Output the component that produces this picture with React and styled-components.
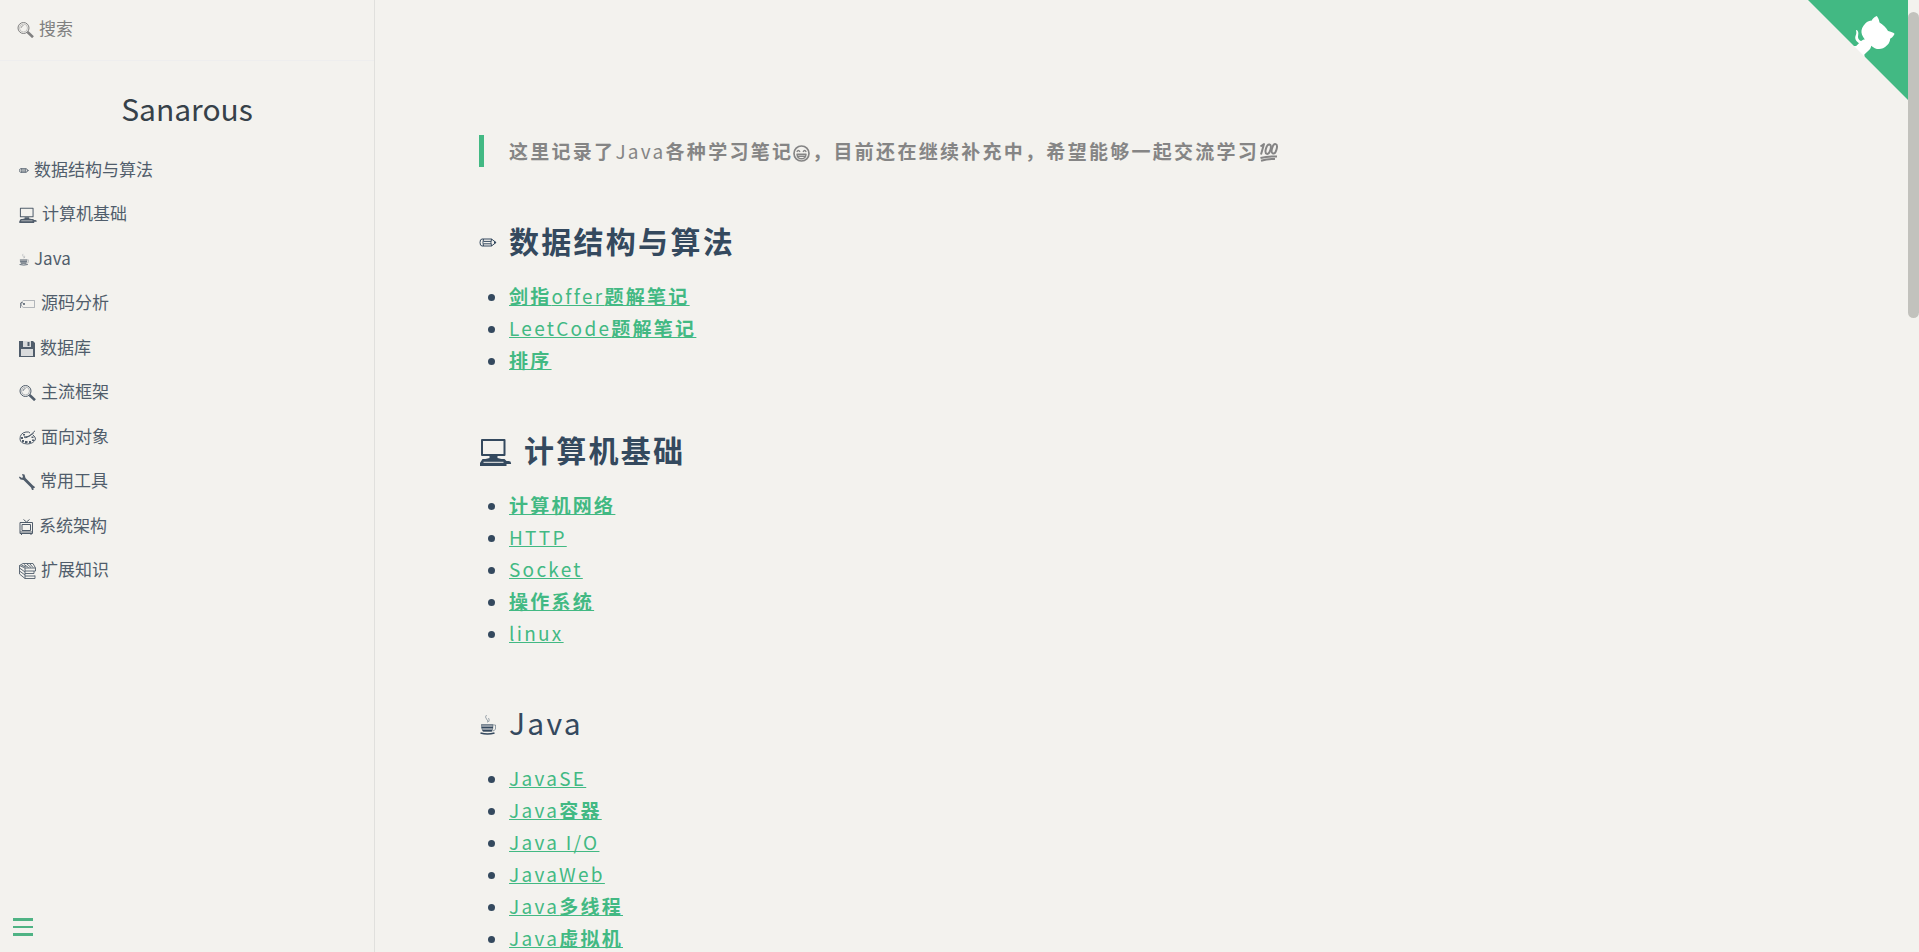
import React from "react";
import styled, { createGlobalStyle } from "styled-components";

const Global = createGlobalStyle`
  * { box-sizing: border-box; }
  body {
    margin: 0;
    background: #f3f2ee;
    color: #34495e;
    font-family: "Noto Sans CJK SC", sans-serif;
  }
`;

const Shell = styled.div`
  display: flex;
  height: 100vh;
  overflow: hidden;
`;

const Sidebar = styled.aside`
  position: relative;
  flex: 0 0 375px;
  border-right: 1px solid #e0e0dd;
`;

const Search = styled.form`
  display: flex;
  align-items: center;
  gap: 5px;
  height: 61px;
  padding: 0 17px 4px;
  border-bottom: 1px solid #eeeeee;
  color: #808080;
`;

const SearchInput = styled.input`
  flex: 1;
  min-width: 0;
  padding: 0;
  border: 0;
  outline: 0;
  background: transparent;
  color: #34495e;
  font: inherit;
  font-size: 17px;
  line-height: 28px;
  &::placeholder { color: #808080; opacity: 1; }
`;

const AppName = styled.h1`
  margin: 26px 0 19px;
  text-align: center;
  font-size: 30px;
  font-weight: 400;
  line-height: 42px;
  color: #364149;
  a { color: inherit; text-decoration: none; }
`;

const NavList = styled.ul`
  margin: 0;
  padding: 0 19px;
  list-style: none;
`;

const NavItem = styled.li`
  height: 44px;
  &:nth-child(even) { height: 45px; }
`;

const NavLink = styled.a`
  display: flex;
  align-items: center;
  gap: 5px;
  color: #505d6b;
  font-size: 17px;
  line-height: 42px;
  text-decoration: none;
  white-space: nowrap;
`;

const Glyph = styled.svg`
  flex: none;
  margin-top: 3px;
  fill: none;
  stroke: currentColor;
  stroke-width: ${(p) => p.$weight || 1};
  stroke-linejoin: round;
`;

const InlineGlyph = styled(Glyph)`
  margin: 0 2px 0 0;
  vertical-align: -3px;
`;

const Toggle = styled.button`
  position: absolute;
  left: 13px;
  bottom: 16px;
  display: flex;
  flex-direction: column;
  justify-content: space-between;
  width: 20px;
  height: 18px;
  padding: 0;
  border: 0;
  background: none;
`;

const Bar = styled.span`
  height: ${(p) => (p.$thin ? 2 : 3)}px;
  background: #4fb384;
`;

const Main = styled.main`
  flex: 1;
  min-width: 0;
  padding: 135px 104px 0;
  overflow-y: auto;
  scrollbar-width: none;
  letter-spacing: 0.12em;
  font-size: 19px;
  line-height: 32px;
`;

const Quote = styled.blockquote`
  margin: 0;
  padding-left: 25px;
  border-left: 5px solid #42b983;
  color: #858585;
`;

const Heading = styled.h2`
  display: flex;
  align-items: center;
  gap: 12px;
  margin: 53px 0 20px;
  font-size: 30px;
  font-weight: 400;
  line-height: 40px;
  ${Glyph} { margin-top: 5px; }
`;

const Links = styled.ul`
  margin: 0;
  padding-left: 30px;
`;

const TextLink = styled.a`
  color: #42b983;
  text-decoration: underline;
  text-decoration-thickness: 1px;
`;

const Strong = styled.span`
  font-weight: 700;
`;

const Corner = styled.a`
  position: absolute;
  top: 0;
  right: 11px;
  color: #f3f2ee;
  svg { display: block; width: 100px; height: 100px; }
`;

const Thumb = styled.div`
  position: absolute;
  top: 12px;
  right: 0;
  width: 11px;
  height: 306px;
  border-radius: 6px;
  background: #c2c2bd;
`;

const solid = { fill: "currentColor", stroke: "none" };

const Pencil = (p) => (
  <Glyph width="10" height="5" viewBox="0 0 18 9" aria-hidden="true" $weight={1.4} {...p}>
    <path d="M3 1H12.5L17 4.5L12.5 8H3Q1 8 1 4.5Q1 1 3 1ZM4.5 1Q3.4 4.5 4.5 8M12.5 1Q11.4 4.5 12.5 8M4.5 3.4H12M4.5 5.8H12" />
    <path {...solid} d="M15 3L17.5 4.5L15 6Z" />
  </Glyph>
);

const Computer = (p) => (
  <Glyph width="18" height="16" viewBox="0 0 32 28" aria-hidden="true" $weight={1.8} {...p}>
    <path d="M2.5 2H25V17H2.5Z" />
    <path {...solid} d="M10 18H18V20L22 21H6L10 20ZM3 21H25L27 23H29Q32 23 31.5 26H27V28H0.5V25Z" />
    <path d="M4 24.3H24" stroke="#f3f2ee" strokeWidth="1" />
  </Glyph>
);

const Coffee = (p) => (
  <Glyph width="10" height="13" viewBox="0 0 17 21" aria-hidden="true" {...p}>
    <path strokeOpacity="0.45" d="M7 1Q5 3 7 5T8 8.5M9 4Q10.500 6 9 8" />
    <path strokeOpacity="0.5" d="M1.500 10.500H14M14 11H16V15Q15 17 13 17" />
    <path fill="currentColor" fillOpacity="0.35" strokeOpacity="0.5" d="M2 11H13.500Q13.500 16 12 17.500H4Q2 16 2 11Z" />
    <path strokeWidth="1.500" d="M2 13.500H13.500M3 16.500H12.500M1 19Q8 21 15 19" />
  </Glyph>
);

const Tag = () => (
  <Glyph width="17" height="10" viewBox="0 0 17 10" aria-hidden="true">
    <path strokeOpacity="0.4" d="M4.500 1.500H15.500V8.500H4.500L2.500 7V3Z" />
    <path strokeOpacity="0.7" d="M4.500 4.500Q3 2.500 1.500 4V9" />
    <circle {...solid} cx="5" cy="5" r="1" />
  </Glyph>
);

const Floppy = () => (
  <Glyph width="16" height="16" viewBox="0 0 16 16" aria-hidden="true">
    <path {...solid} d="M0 0H14L16 2V16H0Z" />
    <path fill="#d9dbdc" stroke="none" d="M2 8H14V15H2ZM4 0H12V6H4Z" />
    <path {...solid} d="M8.500 1H10.500V5H8.500Z" />
  </Glyph>
);

const Magnifier = () => (
  <Glyph width="17" height="16" viewBox="0 0 17 16" aria-hidden="true">
    <circle cx="6.500" cy="6" r="5.500" />
    <circle cx="6.500" cy="6" r="4" strokeOpacity="0.4" />
    <path strokeOpacity="0.7" d="M4 6Q4.500 3.500 6.500 3.500" />
    <path strokeWidth="2.600" d="M10.500 10L16 15.200" />
  </Glyph>
);

const Palette = () => (
  <Glyph width="17" height="15" viewBox="0 0 17 15" aria-hidden="true">
    <path d="M14 5Q16.500 7 16.500 9Q15 13.500 8.500 14Q1 13.500 1 9Q1 3 7 2Q10 1.500 11 3M5 7L10 6.500L16 0.800M7 7.500L14.500 3.500M5 7Q7 8.500 8.500 7" />
    <path {...solid} d="M2 7H4V9H2ZM3 10H5V12H3ZM6 11H8.500V13H6ZM10 11H12V13H10ZM13 9.500H15V11H13ZM12.500 6.500H14.500V8H12.500ZM4 4H6V5.500H4Z" />
  </Glyph>
);

const Wrench = () => (
  <Glyph width="16" height="16" viewBox="0 0 16 16" aria-hidden="true">
    <path {...solid} d="M3 0L5.500 0.500L6.500 4L14 11.500L16 13L15.500 14H14.500V16H13L12 13.500L4.500 6L1.500 5.500L0 3.500L0.500 2.500L3 4L4 3Z" />
  </Glyph>
);

const Television = () => (
  <Glyph width="15" height="16" viewBox="0 0 15 16" aria-hidden="true">
    <path d="M4.500 0.500L7.500 3L10.500 0.500M1 3.500H13.500V14.500H1ZM3 5.500H11.500V11.500H3ZM2.500 14.500V16M12 14.500V16M1 13H13" />
  </Glyph>
);

const Books = () => (
  <Glyph width="17" height="16" viewBox="0 0 17 16" aria-hidden="true">
    <path strokeWidth="0.900" d="M0.500 2.500L4 0.500H14L16.500 5H6L0.500 2.500V11L6 15.500H16V12.500M6 5V15.500M6 8H16.500V5M6 10.500H15V8M6 13H16M0.500 5L6 9M0.500 8L6 12M2.500 2.200L7 4M5 1.500L9.500 4.500M8 1L12 4.500M11 1L14 4.500" />
  </Glyph>
);

const Laugh = () => (
  <InlineGlyph as="svg" width="17" height="17" viewBox="0 0 17 17" role="img" aria-label="笑" $weight={1.7}>
    <circle cx="8.500" cy="8.500" r="7.500" />
    <path d="M3.800 6.800Q5.300 4.200 7 6.800M10 6.800Q11.700 4.200 13.200 6.800M4 9.300H13Q12.500 13.800 8.500 13.800T4 9.300ZM5 11.200H12" strokeWidth="1.400" />
  </InlineGlyph>
);

const Hundred = () => (
  <InlineGlyph as="svg" width="20" height="20" viewBox="0 0 20 20" role="img" aria-label="满分" $weight={2}>
    <path d="M1.500 4.500L5 2L2 12.500M1.500 16Q9 14 18 14.500M2 18.800Q9 16.500 16 17" />
    <ellipse cx="9.200" cy="7.200" rx="2.300" ry="4.900" transform="rotate(16 9.200 7.200)" />
    <ellipse cx="15.300" cy="6.800" rx="2.300" ry="4.900" transform="rotate(16 15.300 6.800)" />
  </InlineGlyph>
);

const NAV = [
  [Pencil, "数据结构与算法"],
  [Computer, "计算机基础"],
  [Coffee, "Java"],
  [Tag, "源码分析"],
  [Floppy, "数据库"],
  [Magnifier, "主流框架"],
  [Palette, "面向对象"],
  [Wrench, "常用工具"],
  [Television, "系统架构"],
  [Books, "扩展知识"],
];

const SECTIONS = [
  {
    icon: <Pencil width="18" height="9" $weight={1} />,
    title: "数据结构与算法",
    links: ["剑指offer题解笔记", "LeetCode题解笔记", "排序"],
  },
  {
    icon: <Computer width="33" height="28" $weight={2} />,
    title: "计算机基础",
    links: ["计算机网络", "HTTP", "Socket", "操作系统", "linux"],
  },
  {
    icon: <Coffee width="18" height="21" />,
    title: "Java",
    links: ["JavaSE", "Java容器", "Java I/O", "JavaWeb", "Java多线程", "Java虚拟机"],
  },
];

// Chinese runs are set bold, Latin runs stay regular.
const Mixed = ({ text }) =>
  text
    .split(/([A-Za-z/ ]+)/)
    .filter(Boolean)
    .map((part, i) => (/[A-Za-z]/.test(part) ? part : <Strong key={i}>{part}</Strong>));

export default function App() {
  return (
    <>
      <Global />
      <Shell>
        <Sidebar>
          <Search role="search">
            <Magnifier />
            <SearchInput type="search" aria-label="搜索" placeholder="搜索" />
          </Search>
          <AppName><a href="#home">Sanarous</a></AppName>
          <nav>
            <NavList>
              {NAV.map(([Icon, label]) => (
                <NavItem key={label}>
                  <NavLink href={`#${label}`}><Icon />{label}</NavLink>
                </NavItem>
              ))}
            </NavList>
          </nav>
          <Toggle type="button" aria-label="Menu">
            <Bar /><Bar $thin /><Bar />
          </Toggle>
        </Sidebar>
        <Main>
          <Quote>
            <Mixed text="这里记录了Java各种学习笔记" />
            <Laugh />
            <Mixed text="，目前还在继续补充中，希望能够一起交流学习" />
            <Hundred />
          </Quote>
          {SECTIONS.map((s) => (
            <section key={s.title}>
              <Heading id={s.title}>
                {s.icon}
                <span><Mixed text={s.title} /></span>
              </Heading>
              <Links>
                {s.links.map((l) => (
                  <li key={l}><TextLink href={`#${l}`}><Mixed text={l} /></TextLink></li>
                ))}
              </Links>
            </section>
          ))}
        </Main>
        <Corner href="#github" aria-label="View source on Github">
          <svg viewBox="0 0 250 250" aria-hidden="true">
            <path fill="#42b983" d="M0,0 L115,115 L130,115 L142,142 L250,250 L250,0 Z" />
            <path fill="#fff" d="M128.3,109.0 C113.8,99.7 119.0,89.6 119.0,89.6 C122.0,82.7 120.5,78.6 120.5,78.6 C119.2,72.0 123.4,76.3 123.4,76.3 C127.3,80.9 125.5,87.3 125.5,87.3 C122.9,97.6 130.6,101.9 134.4,103.2" />
            <path fill="#fff" d="M115.0,115.0 C114.9,115.1 118.7,116.5 119.8,115.4 L133.7,101.6 C136.9,99.2 139.9,98.4 142.2,98.6 C133.8,88.0 127.5,74.4 143.8,58.0 C148.5,53.4 154.0,51.2 159.7,51.0 C160.3,49.4 163.2,43.6 171.4,40.1 C171.4,40.1 176.1,42.5 178.8,56.2 C183.1,58.6 187.2,61.8 190.9,65.4 C194.5,69.0 197.7,73.2 200.1,77.6 C213.8,80.2 216.3,84.9 216.3,84.9 C212.7,93.1 206.9,96.0 205.4,96.6 C205.1,102.4 203.0,107.8 198.3,112.5 C181.9,128.9 168.3,122.5 157.7,114.1 C157.9,116.9 156.7,120.9 152.7,124.9 L141.0,136.5 C139.8,137.7 141.6,141.9 141.8,141.8 Z" />
          </svg>
        </Corner>
        <Thumb />
      </Shell>
    </>
  );
}
